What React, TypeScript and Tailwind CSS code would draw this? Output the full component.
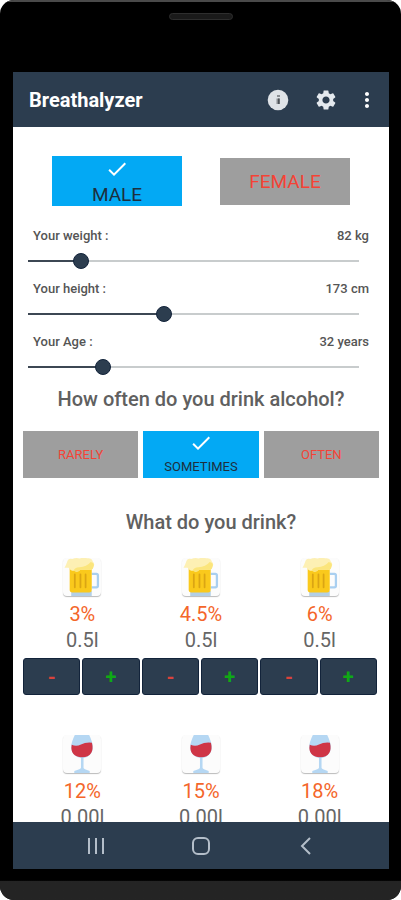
import { useState } from 'react';
import clsx from 'clsx';
import { MdCheck, MdMoreVert, MdSettings } from 'react-icons/md';

interface Drink {
  kind: 'beer' | 'wine';
  strength: string;
  amount: number;
  digits: number;
}

const initialDrinks: Drink[] = [
  { kind: 'beer', strength: '3%', amount: 0.5, digits: 1 },
  { kind: 'beer', strength: '4.5%', amount: 0.5, digits: 1 },
  { kind: 'beer', strength: '6%', amount: 0.5, digits: 1 },
  { kind: 'wine', strength: '12%', amount: 0, digits: 2 },
  { kind: 'wine', strength: '15%', amount: 0, digits: 2 },
  { kind: 'wine', strength: '18%', amount: 0, digits: 2 },
];

function InfoIcon() {
  return (
    <svg width="24" height="24" viewBox="0 0 24 24" aria-hidden="true">
      <circle cx="12" cy="12" r="10.3" fill="#dfe3e7" />
      <path d="M11 7h3v2h-3zM10.500 10.500H14V16h-3.500z" fill="#8b8f93" />
      <path d="M12 10.500h1.500V16H12z" fill="#4d5257" />
    </svg>
  );
}

function BeerIcon() {
  return (
    <svg viewBox="0 0 37 37" className="size-full" aria-hidden="true">
      <path d="M28 15.500h4.500q1.500 0 1.500 1.500v10q0 1.500-1.500 1.500H28" fill="none" stroke="#a9cff0" strokeWidth="2.2" />
      <path d="M8 32h20v5H8z" fill="#b3cfe6" />
      <path d="M6.500 9h21.500v22q0 2.500-2.500 2.500H9q-2.500 0-2.500-2.500z" fill="#fac91c" />
      <path d="M11.500 16v12.500M17 16v12.500M22 16v12.500" stroke="#dba514" strokeWidth="1.7" strokeLinecap="round" />
      <path
        d="M1.500 9.500Q3 7 4 4Q5 0 9 1Q13-.5 16 .5Q20-.8 24 .3Q28 0 29 3.500Q31.500 6 29.500 9Q29 12 25 11.500L17 11.500Q14 14.500 10.500 12.500Q7 12.500 5.500 9.500z"
        fill="#fdf0b4"
      />
      <path d="M17 11.500Q14 14.500 10.500 12.500Q11 9 16 9Q23 9 27 4Q31.500 5 29.500 9Q29 12 25 11.500z" fill="#fbe57c" />
    </svg>
  );
}

function WineIcon() {
  return (
    <svg viewBox="0 0 37 37" className="size-full" aria-hidden="true">
      <path
        d="M11.500 0h14q3.500 7 3.500 12q0 8.500-9 10.500v9.500q0 1.500 6 3v2H11v-2q6.500-1.500 6.500-3v-9.500Q8 20.500 8 12q0-5 3.500-12z"
        fill="#b5d7f3"
      />
      <path d="M8.500 9.500q4.500 2 9-.3t10.700-1.700q3 13.500-9.700 14.200Q6.500 21 8.500 9.500z" fill="#cf3546" />
    </svg>
  );
}

interface ChoiceProps {
  label: string;
  selected: boolean;
  onClick: () => void;
  large?: boolean;
}

function Choice({ label, selected, onClick, large }: ChoiceProps) {
  return (
    <button
      type="button"
      aria-pressed={selected}
      onClick={onClick}
      className={clsx(
        'flex flex-col items-center justify-center leading-[23px]',
        large ? 'w-[130px] gap-0.5 text-[19px]' : 'h-[47px] flex-1 text-[13px]',
        large && (selected ? 'h-[50px]' : 'h-[47px]'),
        selected ? 'bg-[#03a9f4] text-[#1d2f3d]' : 'bg-[#9e9e9e] text-[#f44336]',
      )}
    >
      {selected && <MdCheck size={24} className="text-white" />}
      {label}
    </button>
  );
}

interface SliderRowProps {
  id: string;
  label: string;
  unit: string;
  min: number;
  max: number;
  start: number;
}

function SliderRow({ id, label, unit, min, max, start }: SliderRowProps) {
  const [value, setValue] = useState(start);
  const percent = ((value - min) / (max - min)) * 100;

  return (
    <div className="flex flex-col gap-[7px]">
      <div className="flex justify-between px-5 text-[13px] leading-5 font-medium text-[#555]">
        <label htmlFor={id}>{label} :</label>
        <output htmlFor={id}>
          {value} {unit}
        </output>
      </div>
      <input
        id={id}
        type="range"
        min={min}
        max={max}
        value={value}
        onChange={(e) => setValue(Number(e.target.value))}
        style={{ backgroundImage: `linear-gradient(to right, #3c4753 ${percent}%, #c8cccd ${percent}%)` }}
        className="mr-[22px] ml-[7px] h-4 appearance-none bg-[length:calc(100%-16px)_2px] bg-center bg-no-repeat [&::-webkit-slider-thumb]:size-4 [&::-webkit-slider-thumb]:appearance-none [&::-webkit-slider-thumb]:rounded-full [&::-webkit-slider-thumb]:border [&::-webkit-slider-thumb]:border-[#12233a] [&::-webkit-slider-thumb]:bg-[#2c3d4f]"
      />
    </div>
  );
}

interface DrinkCardProps {
  drink: Drink;
  onChange: (delta: number) => void;
}

function DrinkCard({ drink, onChange }: DrinkCardProps) {
  const stepButton =
    'h-[37px] flex-1 rounded-[3px] border border-[#12233a] bg-[#2c3d4f] text-xl leading-5 font-bold';

  return (
    <div className="flex flex-col items-center">
      <div className="size-[38px] rounded-sm bg-[#fcfcfc] shadow-[0_1px_1px_#bbb]">
        {drink.kind === 'beer' ? <BeerIcon /> : <WineIcon />}
      </div>
      <p className="mt-[5px] text-xl leading-[26px] text-[#f4662a]">{drink.strength}</p>
      <p className="text-xl leading-[26px] text-[#666]">{drink.amount.toFixed(drink.digits)}l</p>
      <div className="mt-[5px] flex w-full gap-0.5 pr-0.5">
        <button type="button" aria-label="Less" onClick={() => onChange(-0.5)} className={clsx(stepButton, 'text-[#d9433c]')}>
          -
        </button>
        <button type="button" aria-label="More" onClick={() => onChange(0.5)} className={clsx(stepButton, 'text-[#0fa915]')}>
          +
        </button>
      </div>
    </div>
  );
}

export default function App() {
  const [gender, setGender] = useState('MALE');
  const [frequency, setFrequency] = useState('SOMETIMES');
  const [drinks, setDrinks] = useState(initialDrinks);

  const changeAmount = (index: number, delta: number) => {
    setDrinks(drinks.map((d, i) => (i === index ? { ...d, amount: Math.max(0, d.amount + delta) } : d)));
  };

  return (
    <div className="h-screen bg-white font-[Roboto,sans-serif]">
      <div className="flex h-full flex-col overflow-hidden rounded-[14px] bg-black">
        {/* top bezel with the speaker */}
        <div className="flex h-[72px] shrink-0 justify-center border-t-2 border-[#4a4a4a] pt-[11px]">
          <div className="h-[7px] w-16 rounded-full border border-[#2e2e2e] bg-[#1a1a1a]" />
        </div>

        <div className="mr-3 ml-[13px] flex min-h-0 flex-1 flex-col bg-white">
          <header className="flex h-[55px] shrink-0 items-center bg-[#2c3d4f] pr-[10px] pl-4 text-white">
            <h1 className="flex-1 text-xl font-bold">Breathalyzer</h1>
            <div className="flex items-center text-[#e4e9ee]">
              <button type="button" aria-label="Info" className="mr-6">
                <InfoIcon />
              </button>
              <button type="button" aria-label="Settings" className="mr-[17px]">
                <MdSettings size={24} />
              </button>
              <button type="button" aria-label="More options" className="text-white">
                <MdMoreVert size={24} />
              </button>
            </div>
          </header>

          <main className="min-h-0 flex-1 overflow-hidden">
            <div className="mt-[29px] flex items-center justify-center gap-[38px]">
              <Choice large label="MALE" selected={gender === 'MALE'} onClick={() => setGender('MALE')} />
              <Choice large label="FEMALE" selected={gender === 'FEMALE'} onClick={() => setGender('FEMALE')} />
            </div>

            <div className="mt-5 flex flex-col gap-[10px]">
              <SliderRow id="weight" label="Your weight" unit="kg" min={40} max={300} start={82} />
              <SliderRow id="height" label="Your height" unit="cm" min={105} max={270} start={173} />
              <SliderRow id="age" label="Your Age" unit="years" min={18} max={80} start={32} />
            </div>

            <h2 className="mt-3 text-center text-xl leading-6 font-medium text-[#606060]">
              How often do you drink alcohol?
            </h2>
            <div className="mt-5 flex gap-[5px] px-[10px]">
              {['RARELY', 'SOMETIMES', 'OFTEN'].map((f) => (
                <Choice key={f} label={f} selected={frequency === f} onClick={() => setFrequency(f)} />
              ))}
            </div>

            <h2 className="mt-8 pl-5 text-center text-xl leading-6 font-medium text-[#606060]">
              What do you drink?
            </h2>
            <div className="mt-6 grid grid-cols-3 gap-y-10 px-[10px]">
              {drinks.map((drink, i) => (
                <DrinkCard key={drink.strength} drink={drink} onChange={(delta) => changeAmount(i, delta)} />
              ))}
            </div>
          </main>

          <nav className="flex h-[47px] shrink-0 items-center justify-center gap-[81px] bg-[#2c3d4f] text-[#b4bec9]">
            <button type="button" aria-label="Recent apps">
              <svg width="24" height="24" viewBox="0 0 24 24" fill="none" stroke="currentColor" strokeWidth="2">
                <path d="M5 4v16M12 4v16M19 4v16" />
              </svg>
            </button>
            <button type="button" aria-label="Home">
              <svg width="24" height="24" viewBox="0 0 24 24" fill="none" stroke="currentColor" strokeWidth="2">
                <rect x="4" y="4" width="16" height="16" rx="5" />
              </svg>
            </button>
            <button type="button" aria-label="Back">
              <svg width="24" height="24" viewBox="0 0 24 24" fill="none" stroke="currentColor" strokeWidth="2">
                <path d="M16 4l-8 8 8 8" />
              </svg>
            </button>
          </nav>
        </div>

        {/* bottom bezel */}
        <div className="h-[31px] shrink-0 bg-linear-to-b from-black from-35% to-[#242424] to-40%" />
      </div>
    </div>
  );
}
